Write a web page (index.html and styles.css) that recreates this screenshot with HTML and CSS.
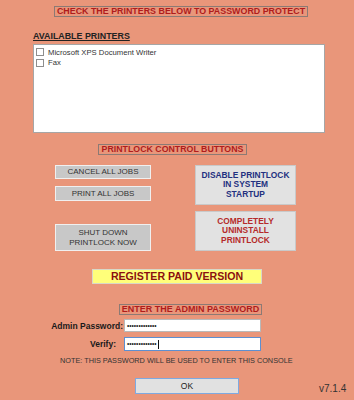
FILE: index.html
```html
<!DOCTYPE html>
<html>
<head>
<meta charset="utf-8">
<link rel="stylesheet" href="styles.css">
</head>
<body>
<div class="app">
  <div class="caption caption-top">CHECK THE PRINTERS BELOW TO PASSWORD PROTECT</div>
  <div class="section-label">AVAILABLE PRINTERS</div>
  <div class="listbox">
    <div class="item"><span class="check"></span><span>Microsoft XPS Document Writer</span></div>
    <div class="item"><span class="check"></span><span>Fax</span></div>
  </div>
  <div class="caption caption-controls">PRINTLOCK CONTROL BUTTONS</div>
  <div class="controls">
    <div class="col col-left">
      <div class="btn btn-gray btn-cancel">CANCEL ALL JOBS</div>
      <div class="btn btn-gray btn-print">PRINT ALL JOBS</div>
      <div class="btn btn-gray btn-shut">SHUT DOWN<br>PRINTLOCK NOW</div>
    </div>
    <div class="col col-right">
      <div class="btn btn-light btn-blue">DISABLE PRINTLOCK<br>IN SYSTEM<br>STARTUP</div>
      <div class="btn btn-light btn-red">COMPLETELY<br>UNINSTALL<br>PRINTLOCK</div>
    </div>
  </div>
  <div class="register">REGISTER PAID VERSION</div>
  <div class="caption caption-admin">ENTER THE ADMIN PASSWORD</div>
  <div class="field-row row-admin">
    <div class="field-label">Admin Password:</div>
    <div class="field"><span class="dots">•••••••••••••</span></div>
  </div>
  <div class="field-row row-verify">
    <div class="field-label">Verify:</div>
    <div class="field field-focus"><span class="dots">•••••••••••••</span><span class="caret"></span></div>
  </div>
  <div class="note">NOTE: THIS PASSWORD WILL BE USED TO ENTER THIS CONSOLE</div>
  <div class="bottom">
    <div class="ok">OK</div>
    <div class="version">v7.1.4</div>
  </div>
</div>
</body>
</html>
```
FILE: styles.css
```css
* { box-sizing: border-box; }
html, body { margin: 0; padding: 0; }
body {
  width: 354px;
  height: 400px;
  background: #e9967a;
  font-family: "Liberation Sans", Arial, sans-serif;
  font-size: 8px;
  color: #222;
  overflow: hidden;
}
.app { display: flex; flex-direction: column; align-items: flex-start; }

.caption {
  border: 1px solid #8c7a74;
  color: #b01c1c;
  font-weight: bold;
  text-align: center;
  height: 11px;
  line-height: 9px;
  white-space: nowrap;
}
.caption-top { margin: 6px 0 0 54px; width: 254px; font-size: 8.9px; }
.section-label {
  margin: 15px 0 0 33px;
  font-weight: bold;
  text-decoration: underline;
  color: #222;
  font-size: 8.9px;
  line-height: 8px;
}
.listbox {
  margin: 4px 0 0 33px;
  width: 292px;
  height: 89px;
  background: #fff;
  border: 1px solid #a6a6a6;
  padding: 2px 0 0 2px;
}
.item { display: flex; align-items: center; gap: 4px; height: 10.5px; color: #333; font-size: 7.7px; }
.check { width: 8px; height: 8px; border: 1px solid #8e8e8e; background: #fff; flex: none; }

.caption-controls { margin: 11px 0 0 98px; width: 149px; font-size: 8.8px; }

.controls { display: flex; gap: 44px; margin: 10px 0 0 55px; }
.col { display: flex; flex-direction: column; }
.col-left { width: 96px; }
.col-right { width: 101px; gap: 6px; }
.btn {
  display: flex;
  align-items: center;
  justify-content: center;
  text-align: center;
  line-height: 9.5px;
  font-size: 8px;
}
.btn-gray { background: #c8c8c8; border: 1px solid #f0f0f0; color: #333; }
.btn-cancel { height: 14px; }
.btn-print { height: 15px; margin-top: 7px; }
.btn-shut { height: 27px; margin-top: 23px; }
.btn-light { background: #e2e2e2; border: 1px solid #c9c9c9; height: 40px; font-weight: bold; font-size: 8.4px; }
.btn-blue { color: #22307f; }
.btn-red { color: #b52a2a; }

.register {
  margin: 18px 0 0 92px;
  width: 170px;
  height: 15px;
  background: #ffff7a;
  border: 1px solid #d8d8c8;
  color: #8b1010;
  font-weight: bold;
  font-size: 10.6px;
  line-height: 13px;
  text-align: center;
}
.caption-admin { margin: 20px 0 0 119px; width: 143px; font-size: 9px; }

.field-row { display: flex; align-items: center; }
.row-admin { margin-top: 4px; }
.row-verify { margin-top: 5px; }
.field-label {
  width: 124px;
  text-align: right;
  font-weight: bold;
  color: #1a1a1a;
  font-size: 8.5px;
  padding-right: 1px;
}
.row-verify .field-label { padding-right: 8px; }
.field {
  width: 137px;
  height: 13px;
  background: #fff;
  border: 1px solid #b9b9b9;
  display: flex;
  align-items: center;
  padding-left: 2px;
}
.row-verify .field { height: 14px; }
.field-focus { border-color: #5d8fd0; }
.dots { font-size: 6.5px; letter-spacing: 0; color: #222; line-height: 6px; }
.caret { width: 1px; height: 9px; background: #111; margin-left: 1px; }

.note { margin: 5px 0 0 60px; font-size: 7.3px; color: #333; white-space: nowrap; }

.bottom { display: flex; align-items: center; margin: 13px 0 0 135px; }
.ok {
  width: 104px;
  height: 16px;
  background: #e1e1e1;
  border: 1px solid #7ea9e0;
  text-align: center;
  line-height: 14px;
  font-size: 8.5px;
  color: #222;
}
.version { margin: 4px 0 0 80px; font-size: 10px; color: #333; }
```
